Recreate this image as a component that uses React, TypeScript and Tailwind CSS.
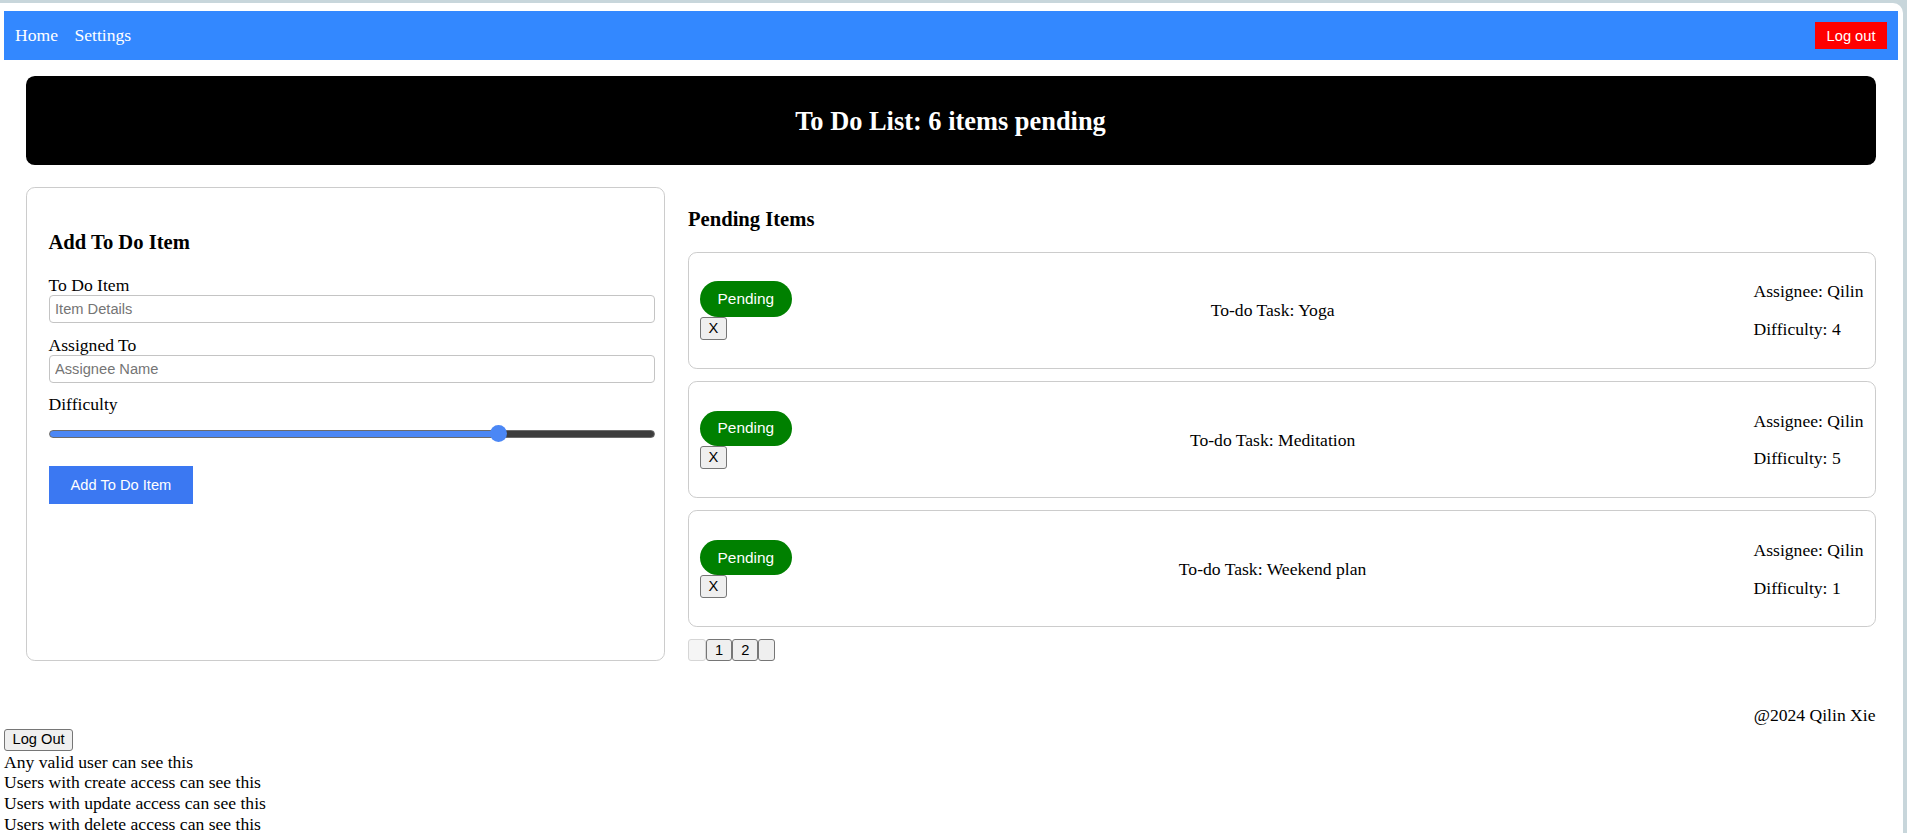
import { useState } from "react";

const items = [
  { task: "Yoga", assignee: "Qilin", difficulty: 4 },
  { task: "Meditation", assignee: "Qilin", difficulty: 5 },
  { task: "Weekend plan", assignee: "Qilin", difficulty: 1 },
];

function ItemCard({ task, assignee, difficulty }: { task: string; assignee: string; difficulty: number }) {
  return (
    <div className="flex items-center justify-between border border-[#cccccc] rounded-[8.8px] p-[11px]">
      <div className="flex flex-col items-start">
        <button className="rounded-full bg-[#008000] text-white px-[17.6px] py-[8.8px] text-[15.4px] leading-[17.7px] font-['Liberation_Sans',Arial,sans-serif]">
          Pending
        </button>
        <button className="h-[23px] px-[7.5px] bg-[#efefef] border border-[#767676] rounded-[3px] text-[14.67px] leading-[17px] font-['Liberation_Sans',Arial,sans-serif]">
          X
        </button>
      </div>
      <p className="leading-[20.2px]">To-do Task: {task}</p>
      <div>
        <p className="my-[17.6px] leading-[20.2px]">Assignee: {assignee}</p>
        <p className="my-[17.6px] leading-[20.2px]">Difficulty: {difficulty}</p>
      </div>
    </div>
  );
}

export default function App() {
  const [difficulty, setDifficulty] = useState(4);
  const pct = ((difficulty - 1) / 4) * 100;

  return (
    <div className="min-h-screen bg-[#c8d6db] pt-[3px] text-black text-[17.6px] font-['Liberation_Serif','Times_New_Roman',serif]">
      <div className="min-h-[830px] bg-white rounded-tr-[10px] mr-[4px] pt-[8px]">
        <nav className="ml-[4px] mr-[5px] h-[49px] bg-[#3388ff] flex items-center justify-between px-[11px]">
          <div className="flex gap-[16.5px] text-white leading-[20.2px]">
            <a>Home</a>
            <a>Settings</a>
          </div>
          <button className="h-[27px] px-[11.5px] bg-[#ff0000] text-white text-[14.67px] font-['Liberation_Sans',Arial,sans-serif]">
            Log out
          </button>
        </nav>

        <main className="ml-[25.5px] mr-[27.5px]">
          <header className="mt-[16px] h-[89px] bg-black rounded-[8.8px] flex items-center justify-center">
            <h2 className="text-white text-[26.4px] font-bold leading-[30px]">To Do List: 6 items pending</h2>
          </header>

          <div className="mt-[22px] flex gap-[23px] items-stretch">
            <form className="w-[639.5px] shrink-0 border border-[#cccccc] rounded-[8.8px] pt-[22px] pl-[22px] pr-[9px]">
              <h3 className="mt-[20.6px] mb-[20.6px] text-[20.6px] font-bold leading-[23.7px]">Add To Do Item</h3>
              <label className="block leading-[20.2px]">To Do Item</label>
              <input
                placeholder="Item Details"
                className="block w-full h-[28px] border border-[#c4c4c4] rounded-[4px] px-[5.5px] text-[14.67px] font-['Liberation_Sans',Arial,sans-serif] placeholder:text-[#757575] outline-none"
              />
              <label className="block mt-[11.5px] leading-[20.2px]">Assigned To</label>
              <input
                placeholder="Assignee Name"
                className="block w-full h-[28px] border border-[#c4c4c4] rounded-[4px] px-[5.5px] text-[14.67px] font-['Liberation_Sans',Arial,sans-serif] placeholder:text-[#757575] outline-none"
              />
              <label className="block mt-[11.5px] leading-[20.2px]">Difficulty</label>
              <div className="mt-[10px] h-[18px] flex items-center">
                <input
                  type="range"
                  min={1}
                  max={5}
                  value={difficulty}
                  onChange={(e) => setDifficulty(Number(e.target.value))}
                  style={{ background: `linear-gradient(to right, #4b87f5 ${pct}%, #3d3d3d ${pct}%)` }}
                  className="w-full h-[8px] appearance-none rounded-full border border-[#6b6b6b] outline-none [&::-webkit-slider-thumb]:appearance-none [&::-webkit-slider-thumb]:w-[17px] [&::-webkit-slider-thumb]:h-[17px] [&::-webkit-slider-thumb]:rounded-full [&::-webkit-slider-thumb]:bg-[#4b87f5]"
                />
              </div>
              <button
                type="button"
                className="mt-[23.5px] h-[37.5px] px-[22px] bg-[#3b78f2] text-white text-[14.67px] font-['Liberation_Sans',Arial,sans-serif]"
              >
                Add To Do Item
              </button>
            </form>

            <section className="flex-1">
              <h3 className="mt-[20.6px] mb-[20.6px] text-[20.6px] font-bold leading-[23.7px]">Pending Items</h3>
              <div className="flex flex-col gap-[12px]">
                {items.map((it) => (
                  <ItemCard key={it.task} {...it} />
                ))}
              </div>
              <div className="mt-[12px] flex text-[14.67px] font-['Liberation_Sans',Arial,sans-serif]">
                <button disabled className="h-[22px] w-[18px] bg-[#f5f5f5] border border-[#d6d6d6] rounded-[3px]"></button>
                <button className="h-[22px] px-[8px] bg-[#efefef] border border-[#767676] rounded-[3px] leading-[17px]">1</button>
                <button className="h-[22px] px-[8px] bg-[#efefef] border border-[#767676] rounded-[3px] leading-[17px]">2</button>
                <button className="h-[22px] w-[17px] bg-[#efefef] border border-[#767676] rounded-[3px]"></button>
              </div>
            </section>
          </div>

          <footer className="mt-[43.6px] text-right leading-[20.2px]">@2024 Qilin Xie</footer>
        </main>

        <button className="ml-[4px] mt-[1px] h-[22px] px-[7.5px] bg-[#efefef] border border-[#767676] rounded-[3px] text-[14.67px] leading-[17px] font-['Liberation_Sans',Arial,sans-serif]">
          Log Out
        </button>
        <div className="pl-[4px] leading-[20.8px]">
          <div>Any valid user can see this</div>
          <div>Users with create access can see this</div>
          <div>Users with update access can see this</div>
          <div>Users with delete access can see this</div>
        </div>
      </div>
    </div>
  );
}
